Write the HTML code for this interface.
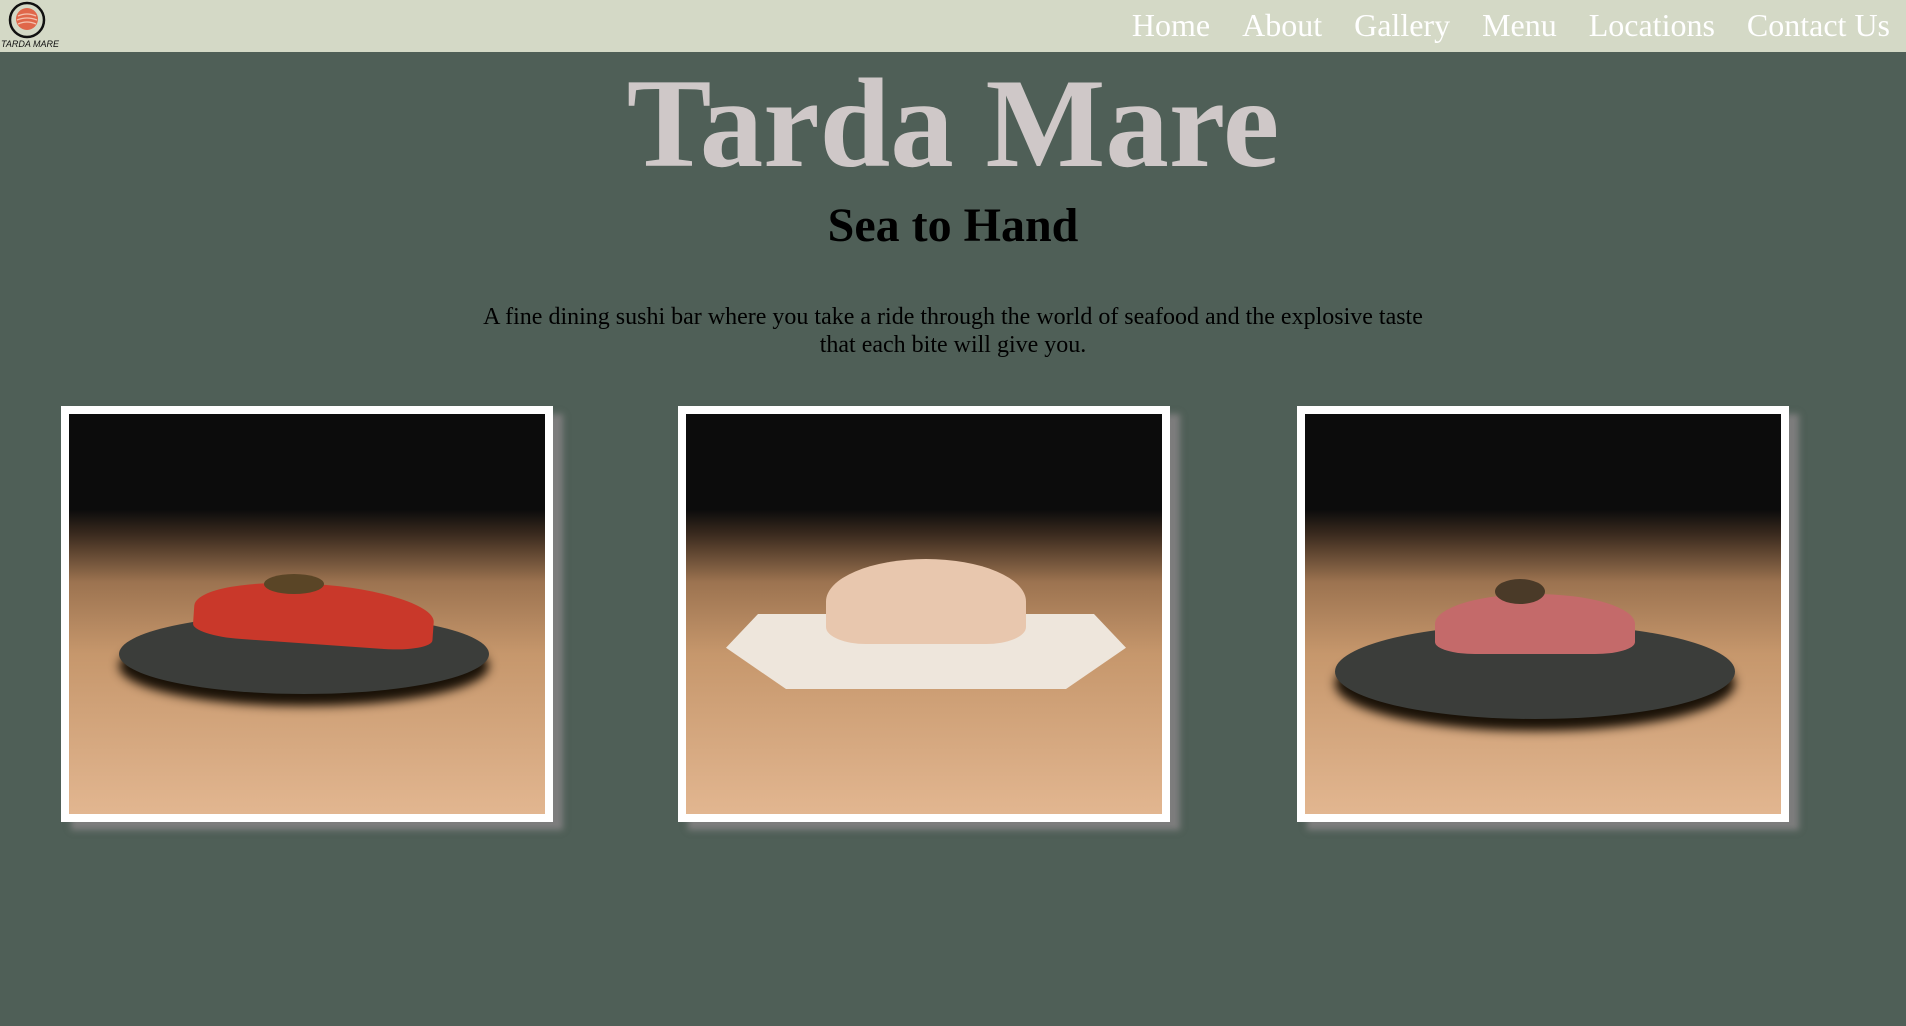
<!DOCTYPE html>
<html><head><style>
html,body{margin:0;padding:0}
body{width:1906px;height:1026px;background:#4f5f57;font-family:"Liberation Serif",serif;position:relative;overflow:hidden}
nav{position:absolute;left:0;top:0;width:1906px;height:52px;background:#d4d9c6}
.links{position:absolute;right:16px;top:7px;font-size:32px;color:#fff;white-space:nowrap}
.links span{margin-left:32px}
h1{position:absolute;left:0;width:1906px;top:44px;margin:0;text-align:center;font-size:127px;line-height:160px;color:#cfc8c8;font-weight:bold}
h2{position:absolute;left:0;width:1906px;top:196px;margin:0;text-align:center;font-size:48px;line-height:60px;color:#000}
p{position:absolute;left:473px;width:960px;top:303px;margin:0;text-align:center;font-size:24px;line-height:28px;color:#000}
.f{position:absolute;top:406px;width:476px;height:400px;border:8px solid #fff;box-shadow:10px 8px 6px #7d7d7d;
background:linear-gradient(#0c0c0c 0%,#0c0c0c 24%,#3a2a1e 30%,#9c7350 42%,#c6976c 60%,#e2b690 100%);overflow:hidden}
.pl{position:absolute;border-radius:50%;background:#3b3d3a;box-shadow:0 12px 10px #1a1208}
.fi{position:absolute;border-radius:50% 50% 20% 20%}
</style></head><body>
<nav>
<svg style="position:absolute;left:7px;top:1px" width="40" height="40" viewBox="0 0 40 40"><circle cx="20" cy="19" r="17" fill="none" stroke="#111" stroke-width="2.5"/><circle cx="20" cy="18" r="11" fill="#e0674a"/><path d="M11 15q9-4 18 0M10 19q10-4 20 0M11 23q9-4 18 0" stroke="#f3c3b0" stroke-width="1.3" fill="none"/></svg>
<div style="position:absolute;left:1px;top:39px;font:9px 'Liberation Sans',sans-serif;color:#111;font-style:italic">TARDA MARE</div>
<div class="links"><span>Home</span><span>About</span><span>Gallery</span><span>Menu</span><span>Locations</span><span>Contact Us</span></div>
</nav>
<h1>Tarda Mare</h1>
<h2>Sea to Hand</h2>
<p>A fine dining sushi bar where you take a ride through the world of seafood and the explosive taste that each bite will give you.</p>
<div class="f" style="left:61px"><div class="pl" style="left:50px;top:200px;width:370px;height:80px"></div><div class="fi" style="left:125px;top:170px;width:240px;height:60px;background:#c9382a;transform:rotate(4deg)"></div><div style="position:absolute;left:195px;top:160px;width:60px;height:20px;border-radius:50%;background:#5a4526"></div></div>
<div class="f" style="left:678px"><div style="position:absolute;left:40px;top:200px;width:400px;height:75px;background:#eee6dc;clip-path:polygon(8% 0,92% 0,100% 45%,85% 100%,15% 100%,0 45%);"></div><div class="fi" style="left:140px;top:145px;width:200px;height:85px;background:#e8c7ae"></div></div>
<div class="f" style="left:1297px"><div class="pl" style="left:30px;top:210px;width:400px;height:95px"></div><div class="fi" style="left:130px;top:180px;width:200px;height:60px;background:#c46a6a"></div><div style="position:absolute;left:190px;top:165px;width:50px;height:25px;border-radius:50%;background:#4a3a28"></div></div>
</body></html>
